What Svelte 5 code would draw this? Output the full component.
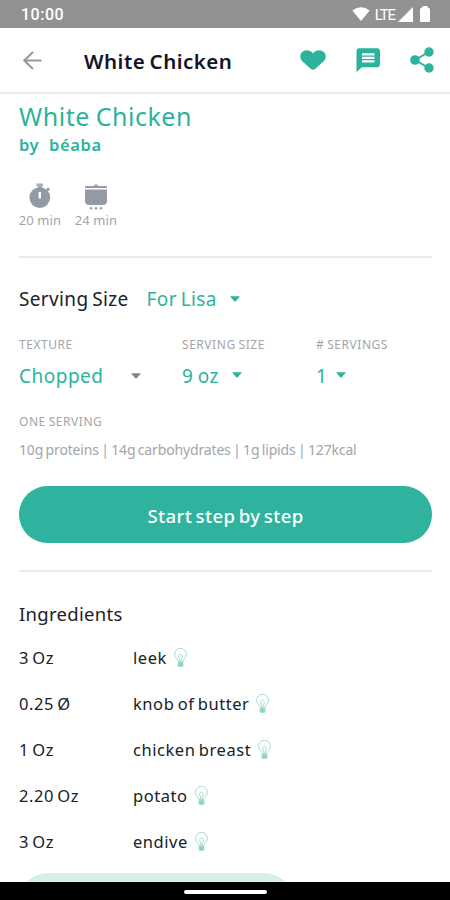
<script lang="ts">
  const ingredients = [
    { qty: '3 Oz', name: 'leek' },
    { qty: '0.25 Ø', name: 'knob of butter' },
    { qty: '1 Oz', name: 'chicken breast' },
    { qty: '2.20 Oz', name: 'potato' },
    { qty: '3 Oz', name: 'endive' },
  ];
</script>

{#snippet caret()}
  <svg class="caret" width="10" height="6" viewBox="0 0 10 6"><path d="M.8.2h8.4q.8 0 .3.7L5.7 5.2q-.7.7-1.4 0L.5.9Q0 .2.8.2z" /></svg>
{/snippet}

<div class="screen">
  <div class="status">
    <span class="time">10:00</span>
    <svg class="wifi" width="18" height="14" viewBox="0 0 18 14"><path d="M.3 3.6Q9-3 17.7 3.6L9 14z" /></svg>
    <span class="lte">LTE</span>
    <svg class="signal" width="15" height="15" viewBox="0 0 15 15"><path d="M15 0v15H0z" /></svg>
    <svg class="battery" width="10" height="16" viewBox="0 0 10 16"><path d="M3 0h4l1 1.6q2 .4 2 2V15q0 1-1 1H1q-1 0-1-1V3.600q0-1.600 2-2z" /></svg>
  </div>

  <header>
    <svg class="back" width="19" height="19" viewBox="0 0 19 19"><path d="M10 1 1.3 9.5 10 18M1.3 9.5H18.5" /></svg>
    <h1>White Chicken</h1>
    <svg class="heart" width="26" height="20" viewBox="0 0 26 20"><path d="M13 3.400C10.400-.7 4.300-.9 1.600 2.600-.7 5.600.2 9.200 2.600 11.500l8 7.200q2.400 1.900 4.800 0l8-7.200c2.400-2.300 3.300-5.900 1-8.900C21.700-.9 15.600-.7 13 3.400z" /></svg>
    <svg class="chat" width="24" height="24" viewBox="0 0 24 24">
      <path fill-rule="evenodd" d="M3 .3h18q3 0 3 3v13q0 3-3 3H6L.5 24V3.300q0-3 2.500-3zM6 5.300v2.200h12.500V5.300zM6 8.700v2.300h12.500V8.700zM6 12.200v2.300h12.500v-2.300z" />
    </svg>
    <svg class="share" width="24" height="26" viewBox="0 0 24 26">
      <path d="M19 5 5 13l14 8" />
      <circle cx="19" cy="5" r="4.7" /><circle cx="5" cy="13" r="4.8" /><circle cx="19" cy="21" r="4.7" />
    </svg>
  </header>

  <main>
    <h2>White Chicken</h2>
    <p class="author">by&nbsp; béaba</p>

    <div class="times">
      <div class="time-item">
        <svg width="22" height="27" viewBox="0 0 22 27">
          <path class="crown" d="M7.500.5h6.500v2.800H7.500zM9 3h4v2H9z" />
          <path d="M17 6.200 19 4.500 21 6l-2 2.500z" />
          <path fill-rule="evenodd" d="M10.800 4.200a10.400 10.400 0 1 1 0 20.800 10.400 10.400 0 0 1 0-20.800zM9.600 9v6.500h2.400V9z" />
        </svg>
        <span>20 min</span>
      </div>
      <div class="time-item">
        <svg width="24" height="27" viewBox="0 0 24 27">
          <path d="M10.500 1.500h3V3H22q1 0 1 1.200v.8H1v-.8Q1 3 2 3h8.500zM1 6.500h22v11q0 4.500-4.500 4.500h-13Q1 22 1 17.500z" />
          <circle cx="7" cy="25.300" r="1.200" /><circle cx="12" cy="25.300" r="1.200" /><circle cx="17" cy="25.300" r="1.200" />
        </svg>
        <span>24 min</span>
      </div>
    </div>

    <hr />

    <div class="serving">
      <span class="heading">Serving Size</span>
      <span class="for">For Lisa</span>
      {@render caret()}
    </div>

    <div class="options">
      <div class="option texture">
        <span class="label">TEXTURE</span>
        <div class="value"><span>Chopped</span>{@render caret()}</div>
      </div>
      <div class="option size">
        <span class="label">SERVING SIZE</span>
        <div class="value"><span>9 oz</span>{@render caret()}</div>
      </div>
      <div class="option count">
        <span class="label"># SERVINGS</span>
        <div class="value"><span>1</span>{@render caret()}</div>
      </div>
    </div>

    <span class="label one">ONE SERVING</span>
    <p class="nutrition">10g proteins | 14g carbohydrates | 1g lipids | 127kcal</p>

    <button>Start step by step</button>

    <hr />

    <h3>Ingredients</h3>
    <ul>
      {#each ingredients as item}
        <li>
          <span class="qty">{item.qty}</span>
          <span class="name">{item.name}</span>
          <svg class="bulb" width="13" height="19" viewBox="0 0 13 19">
            <path d="M4 13.500C4 11 .6 9.800.6 6.200a5.900 5.900 0 0 1 11.800 0C12.400 9.800 9 11 9 13.500z" />
            <path d="M6 13 4.500 7.500 6.500 6 8.500 7.500 7 13" />
            <path class="cap" d="M4 14.500h5v3q0 1-1 1H5q-1 0-1-1z" />
          </svg>
        </li>
      {/each}
    </ul>
    <div class="next"></div>
  </main>

  <div class="nav"><span></span></div>
</div>

<style>
  :global(body) { background: #fff; }
  .screen {
    width: 450px; height: 900px; overflow: hidden;
    display: flex; flex-direction: column;
    background: #fff; color: #202126;
    font-family: "Noto Sans", sans-serif;
  }
  h1, h2, h3, p, ul { margin: 0; padding: 0; font-weight: 400; }
  svg { flex: none; display: block; }
  span, h1, h2, h3, p { white-space: nowrap; }

  .status {
    flex: none; height: 28px; display: flex; align-items: center;
    box-sizing: border-box; padding: 0 20px 0 21px;
    background: #929292; color: #fff; fill: #fff;
  }
  .time { font: 500 16px/28px Roboto, sans-serif; letter-spacing: 0.5px; margin: 2px auto 0 0; }
  .wifi { margin-right: 5px; }
  .lte { font: 400 15px/28px Roboto, sans-serif; letter-spacing: -1.1px; margin: 1px 3px 0 0; }
  .battery { margin-left: 7px; }

  header {
    flex: none; height: 66px; display: flex; align-items: center;
    box-sizing: border-box; padding: 0 16px 0 23px;
    border-bottom: 2px solid #ebebeb; fill: #2bb39d;
  }
  .back { fill: none; stroke: #96989b; stroke-width: 2; }
  h1 { margin: 2px auto 0 42px; font-size: 20.5px; font-weight: 600; color: #11152a; letter-spacing: 0.5px; word-spacing: -1.5px; }
  .chat { margin: 0 30px 0 30px; }
  .share path { fill: none; stroke: #2bb39d; stroke-width: 2; }

  main { flex: 1; min-height: 0; overflow: hidden; padding: 4px 18px 0 19px; }
  h2 { font-size: 25px; line-height: 36px; color: #2bb39d; letter-spacing: 0.5px; word-spacing: -1px; }
  .author { font-size: 16.5px; line-height: 20px; margin-top: 1px; font-weight: 600; color: #2bb39d; letter-spacing: 0.6px; }
  .times { display: flex; gap: 14px; margin-top: 28px; height: 73px; fill: #929aa5; }
  .time-item { width: 42px; display: flex; flex-direction: column; align-items: center; }
  .time-item span { font-size: 13px; line-height: 20px; color: #a1a5aa; letter-spacing: 0.1px; }
  .crown { fill: #a9aeb5; }
  hr { height: 2px; margin: 0; border: 0; background: #e9eaeb; }

  .serving { display: flex; align-items: center; height: 28px; margin-top: 27px; font-size: 19px; letter-spacing: 0.35px; word-spacing: -1.5px; fill: #2bb39d; }
  .for { color: #2bb39d; margin: 0 13px 0 18px; }
  .options { display: flex; margin-top: 22px; }
  .texture { width: 163px; }
  .size { width: 134px; }
  .label { display: block; font-size: 12px; line-height: 20px; color: #a2a5a9; letter-spacing: 0.55px; word-spacing: -0.8px; }
  .value { display: flex; align-items: center; height: 28px; margin-top: 7px; font-size: 19px; letter-spacing: 0.5px; word-spacing: -1px; color: #2bb39d; fill: #2bb39d; }
  .value .caret { margin: -3px 0 0 13px; }
  .count .caret { margin-left: 9px; }
  .texture .caret { margin: -1px 0 0 27px; fill: #85888b; }
  .one { margin-top: 22px; }
  .nutrition { font-size: 14px; line-height: 20px; margin-top: 8px; color: #a2a5a9; word-spacing: -1.1px; letter-spacing: -0.15px; }
  button {
    display: block; width: 413px; height: 57px; margin: 26px 0 27px; padding: 2px 0 0;
    border: 0; border-radius: 29px; background: #30b39e; color: #fff;
    font: 500 18.5px "Noto Sans", sans-serif; letter-spacing: 0.4px; word-spacing: -1.8px;
  }

  h3 { font-size: 18.5px; line-height: 28px; margin-top: 28px; letter-spacing: 0.3px; }
  ul { list-style: none; margin-top: 8px; }
  li { display: flex; align-items: center; height: 46px; font-size: 16.5px; line-height: 22px; letter-spacing: 0.55px; word-spacing: -1.5px; }
  .qty { width: 114px; }
  .qty, .name { margin-top: -2px; }
  .bulb { margin: -3px 0 0 7px; fill: none; stroke: #a5dccf; stroke-width: 1; }
  .cap { fill: #8dd3c3; }
  .next { width: 274px; height: 57px; margin-top: 7px; border-radius: 29px; background: #d7efe8; }

  .nav { flex: none; height: 18px; background: #000; display: flex; justify-content: center; }
  .nav span { width: 83px; height: 4px; margin-top: 8px; border-radius: 2px; background: #fff; }
</style>
